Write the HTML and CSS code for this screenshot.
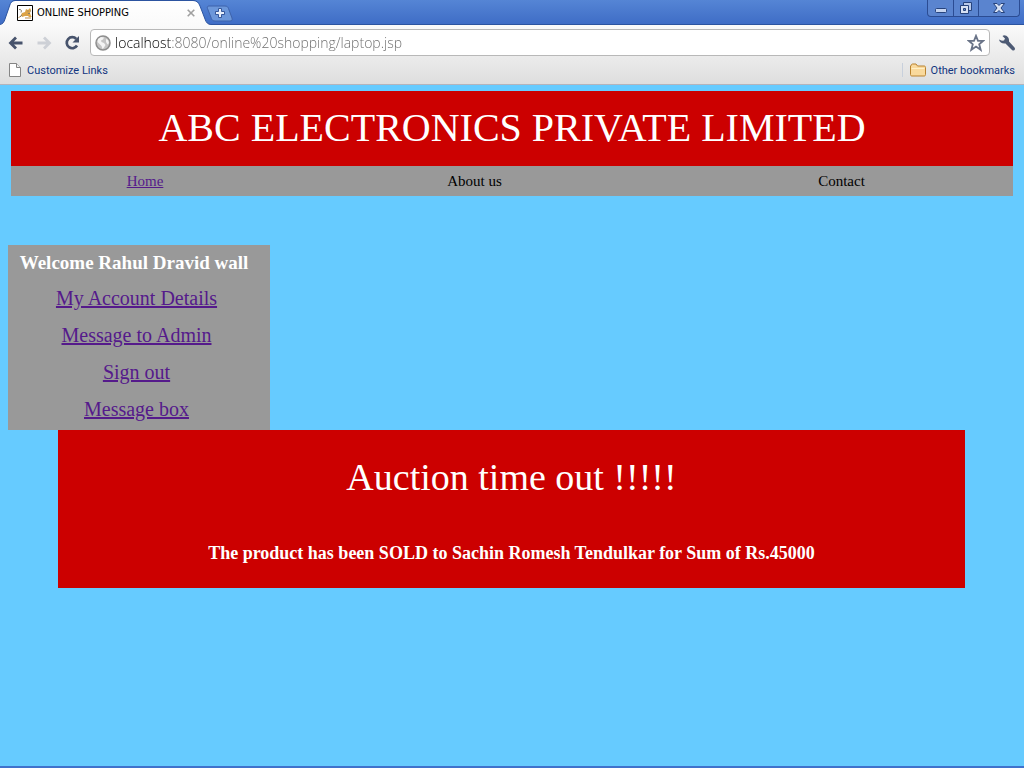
FILE: index.html
```
<!DOCTYPE html>
<html lang="en">
<head>
<meta charset="utf-8">
<title>ONLINE SHOPPING</title>
<link rel="stylesheet" href="styles.css">
</head>
<body>
<div class="browser">
  <header class="chrome">
    <div class="titlebar">
      <div class="tab">
        <svg class="tab-shape" width="216" height="25" viewBox="0 0 216 25" aria-hidden="true">
          <defs><linearGradient id="tabfill" x1="0" y1="0" x2="0" y2="1"><stop offset="0" stop-color="#fff"/><stop offset="1" stop-color="#fafafa"/></linearGradient></defs>
          <path d="M0 24.500C3 24 4 22 5 19L9.500 6C10.500 2.500 12 1 15 1H193C197 1 198.500 2.500 200 6L205 19C206 22.500 208 24.500 211 24.500V25H0Z" fill="url(#tabfill)"/>
          <path d="M0 24.500C3 24 4 22 5 19L9.500 6C10.500 2.500 12 .5 15 .5H193C197 .5 198.500 2.500 200 6L205 19C206 22.500 208 24.500 211 24.500H216" fill="none" stroke="#2c54a0"/>
        </svg>
        <svg class="favicon" width="16" height="16" viewBox="0 0 16 16" aria-hidden="true">
          <path d="M.5.5h15v15H.5z" fill="#fff" stroke="#000"/>
          <path d="M5 8l3-1 1-3 2 1 2-2 1 2-1 3 1 3 1 1h-3l-1-1H8l-3 1-1-2z" fill="#dca346"/>
          <path d="M1.500 12.500c2-.5 2-2 3.500-2.500M8 13h6" fill="none" stroke="#b98b4a"/>
          <path d="M2 4.500c2-.5 3 1 2 3M3 12l2-2M10.500 6h1M13 6h1M11 8.500h2" fill="none" stroke="#8b8069"/>
        </svg>
        <span class="tab-title">ONLINE SHOPPING</span>
        <button class="plain tab-close" aria-label="Close tab"><svg width="8" height="8" viewBox="0 0 8 8"><path d="M.7.7l6.600 6.600M7.300.7L.7 7.300" stroke="#a0a0a0" stroke-width="1.600"/></svg></button>
      </div>
      <button class="plain new-tab" aria-label="New tab"><svg width="27" height="17" viewBox="0 0 27 17">
        <path d="M3 1h16c2 0 3 1 3.500 2.500L26 13c.6 2-.2 3-2 3H9c-2 0-3-1-3.600-2.500L1.500 3.500C1 2 1.500 1 3 1z" fill="#6c97da" stroke="#3d62ab"/>
        <path d="M12.500 3.500h3v3h3v3h-3v3h-3v-3h-3v-3h3z" fill="#e8effa" stroke="#35579a"/></svg></button>
      <div class="window-buttons">
        <button class="plain win" aria-label="Minimize"><svg width="14" height="14" viewBox="0 0 14 14"><rect x="1.500" y="7.500" width="11" height="4" rx="1" fill="#c5d4f0" stroke="#26437d"/></svg></button>
        <button class="plain win" aria-label="Restore"><svg width="14" height="14" viewBox="0 0 14 14"><path d="M4.500 1.500h8v8h-8z" fill="#b9caea" stroke="#26437d"/><path d="M1.500 4.500h8v8h-8z" fill="#d7e1f3" stroke="#26437d"/><path d="M4.500 7.500h2v2h-2z" fill="#6a8fd0" stroke="#26437d"/></svg></button>
        <button class="plain win win-close" aria-label="Close"><svg width="14" height="14" viewBox="0 0 14 14"><path d="M1.500 2.500h3.500l2 2 2-2h3.500L9 7l3.500 4.500H9l-2-2-2 2H1.500L5 7z" fill="#d7e1f3" stroke="#26437d"/></svg></button>
      </div>
    </div>
    <div class="toolbar">
      <button class="plain tool" aria-label="Back"><svg width="16" height="14" viewBox="0 0 16 14"><path d="M14.500 7H3M8 1.500L2.500 7 8 12.500" fill="none" stroke="#47536c" stroke-width="2.800"/></svg></button>
      <button class="plain tool" aria-label="Forward"><svg width="16" height="14" viewBox="0 0 16 14"><path d="M1.500 7H13M8 1.500L13.500 7 8 12.500" fill="none" stroke="#cdd0d6" stroke-width="2.800"/></svg></button>
      <button class="plain tool" aria-label="Reload"><svg width="16" height="16" viewBox="0 0 16 16"><path d="M12.300 4A5.500 5.500 0 1 0 13 10.500" fill="none" stroke="#47536c" stroke-width="2.700"/><path d="M15 1v6.500H8.500z" fill="#47536c"/></svg></button>
      <div class="omnibox">
        <svg width="16" height="16" viewBox="0 0 16 16" aria-hidden="true"><circle cx="8" cy="8" r="7" fill="#c4c4c4" stroke="#8e8e8e" stroke-width="1.500"/><path d="M3 4l3-2 3 .5-1 2-2 1 .5 1.500L9 8l1.500 2L9 12.500 7.500 14l-1-3-2-2L2.500 7zM11 4l2 1 1 3-1.500 1.500L11 7z" fill="#f4f4f4"/></svg>
        <input class="url" type="text" aria-label="Address" value="localhost:8080/online%20shopping/laptop.jsp">
        <button class="plain star" aria-label="Bookmark this page"><svg width="18" height="18" viewBox="0 0 18 18"><path d="M9 1.800l2 5h5.200l-4 3.400 1.500 5.600L9 12.600l-4.700 3.200 1.500-5.600-4-3.400H7z" fill="#fff" stroke="#6a7488" stroke-width="1.800"/></svg></button>
      </div>
      <button class="plain wrench" aria-label="Settings"><svg width="18" height="18" viewBox="0 0 18 18"><path d="M1 5.500C1.500 8.500 4.500 10 7.500 9.500L14 16c2 1.500 4-.5 2.500-2.500L11 7.500C11.500 4 9.500 1.500 6 1.200L4.500 2 7 4.500 6 6.500l-2 .3z" fill="#4d5a74"/></svg></button>
    </div>
    <nav class="bookmarks" aria-label="Bookmarks">
      <a class="bookmark" href="#"><svg width="14" height="16" viewBox="0 0 14 16" aria-hidden="true"><path d="M1.500 1.500h7l4 4v9h-11z" fill="#fff" stroke="#858585"/><path d="M8.500 1.500v4h4" fill="#eee" stroke="#858585"/></svg>Customize Links</a>
      <a class="bookmark other" href="#"><svg width="16" height="14" viewBox="0 0 16 14" aria-hidden="true"><path d="M1 3c0-1 .5-2 1.500-2H6l1.500 2H14c1 0 1.500.5 1.500 1.500v7c0 1-.5 1.500-1.500 1.500H2c-1 0-1.500-.5-1.500-1.500V3z" fill="#f9d99c" stroke="#b9822e"/><path d="M1.500 5.500h13" stroke="#fff0c7"/></svg>Other bookmarks</a>
    </nav>
  </header>
  <main class="page">
    <div class="masthead">
      <h1 class="display brand">ABC ELECTRONICS PRIVATE LIMITED</h1>
      <ul class="menu">
        <li><a class="visited" href="#">Home</a></li>
        <li>About us</li>
        <li>Contact</li>
      </ul>
    </div>
    <nav class="account" aria-label="Account">
      <strong class="welcome">Welcome Rahul Dravid wall</strong>
      <a class="visited" href="#">My Account Details</a>
      <a class="visited" href="#">Message to Admin</a>
      <a class="visited" href="#">Sign out</a>
      <a class="visited" href="#">Message box</a>
    </nav>
    <section class="notice">
      <h2 class="display">Auction time out !!!!!</h2>
      <p class="sold">The product has been SOLD to Sachin Romesh Tendulkar for Sum of Rs.45000</p>
    </section>
  </main>
</div>
</body>
</html>
```
FILE: styles.css
```
* { box-sizing: border-box; }
body {
  margin: 0;
  font-family: "Liberation Serif", "Times New Roman", serif;
}
.browser {
  display: flex;
  flex-direction: column;
  min-height: 100vh;
}
.chrome {
  font-family: "DejaVu Sans Condensed", "Noto Sans", sans-serif;
  font-size: 11px;
  border-bottom: 1px solid #b4b4bc;
  background: linear-gradient(#fafafa 25px, #dedede 100%);
}
.plain {
  display: flex;
  align-items: center;
  justify-content: center;
  padding: 0;
  border: 0;
  background: none;
}
.titlebar {
  display: flex;
  align-items: flex-start;
  height: 25px;
  background: linear-gradient(#5585d5, #3f6dc6);
  border-bottom: 1px solid #2c54a0;
}
.tab {
  position: relative;
  display: flex;
  align-items: center;
  gap: 4px;
  width: 206px;
  height: 25px;
  padding: 0 11px 0 17px;
}
.tab-shape {
  position: absolute;
  top: 0;
  left: 0;
}
.favicon, .tab-title, .tab-close { position: relative; }
.tab-title { flex: 1; color: #000; white-space: nowrap; }
.new-tab { margin-top: 5px; }
.window-buttons {
  display: flex;
  margin-left: auto;
  margin-right: 4px;
  height: 17px;
  border: 1px solid #2b4c93;
  border-top: 0;
  border-radius: 0 0 4px 4px;
  background: #5a84cf;
}
.win { width: 25px; }
.win + .win { border-left: 1px solid #2b4c93; }
.win-close { width: 41px; }
.toolbar {
  display: flex;
  align-items: center;
  height: 35px;
  padding: 0 8px;
}
.tool { width: 16px; height: 16px; margin-right: 12px; }
.omnibox {
  display: flex;
  align-items: center;
  flex: 1;
  gap: 4px;
  height: 27px;
  margin-left: -2px;
  padding: 0 4px;
  border: 1px solid #b8b8b8;
  border-radius: 4px;
  background: #fff;
}
.url {
  flex: 1;
  min-width: 0;
  padding: 0;
  border: 0;
  font-family: "Open Sans", "Noto Sans", sans-serif;
  font-size: 14px;
  font-weight: 300;
  color: transparent;
  background: linear-gradient(to right, #000 56px, #6a6a6a 56px);
  background-clip: text;
  -webkit-background-clip: text;
}
.wrench { width: 18px; margin-left: 8px; }
.bookmarks {
  display: flex;
  justify-content: space-between;
  align-items: center;
  height: 24px;
  padding: 0 9px 4px 8px;
  font-family: Roboto, "Liberation Sans", sans-serif;
}
.bookmark {
  display: flex;
  align-items: center;
  gap: 5px;
  color: #11357f;
  text-decoration: none;
}
.other {
  padding-left: 7px;
  border-left: 1px solid #c8d0dc;
}
.page {
  flex: 1;
  padding: 6px 8px 8px;
  background: #66cbff;
  border-bottom: 2px solid #3f72cc;
}
.masthead { margin: 0 3px; }
.display {
  margin: 0;
  font-size: 40px;
  font-weight: normal;
  text-align: center;
  color: #fff;
}
.brand {
  padding: 14px 0 15px;
  line-height: 46px;
  background: #c00;
}
.menu {
  display: grid;
  grid-template-columns: 268fr 391fr 343fr;
  margin: 0;
  padding: 0;
  list-style: none;
  line-height: 30px;
  font-size: 15px;
  text-align: center;
  background: #999;
}
.visited { color: #551a8b; }
.account {
  display: flex;
  flex-direction: column;
  align-items: center;
  width: 262px;
  margin-top: 49px;
  padding: 0 5px 2px 0;
  font-size: 20px;
  line-height: 37px;
  background: #999;
}
.welcome {
  padding-right: 5px;
  font-size: 19px;
  line-height: 35px;
  color: #fff;
}
.notice {
  margin: 0 51px 0 50px;
  padding: 24px 0;
  text-align: center;
  color: #fff;
  background: #c00;
}
.notice .display {
  font-size: 38px;
  line-height: 46px;
}
.sold {
  margin: 42px 0 0;
  font-size: 18px;
  font-weight: bold;
  line-height: 22px;
}
```
